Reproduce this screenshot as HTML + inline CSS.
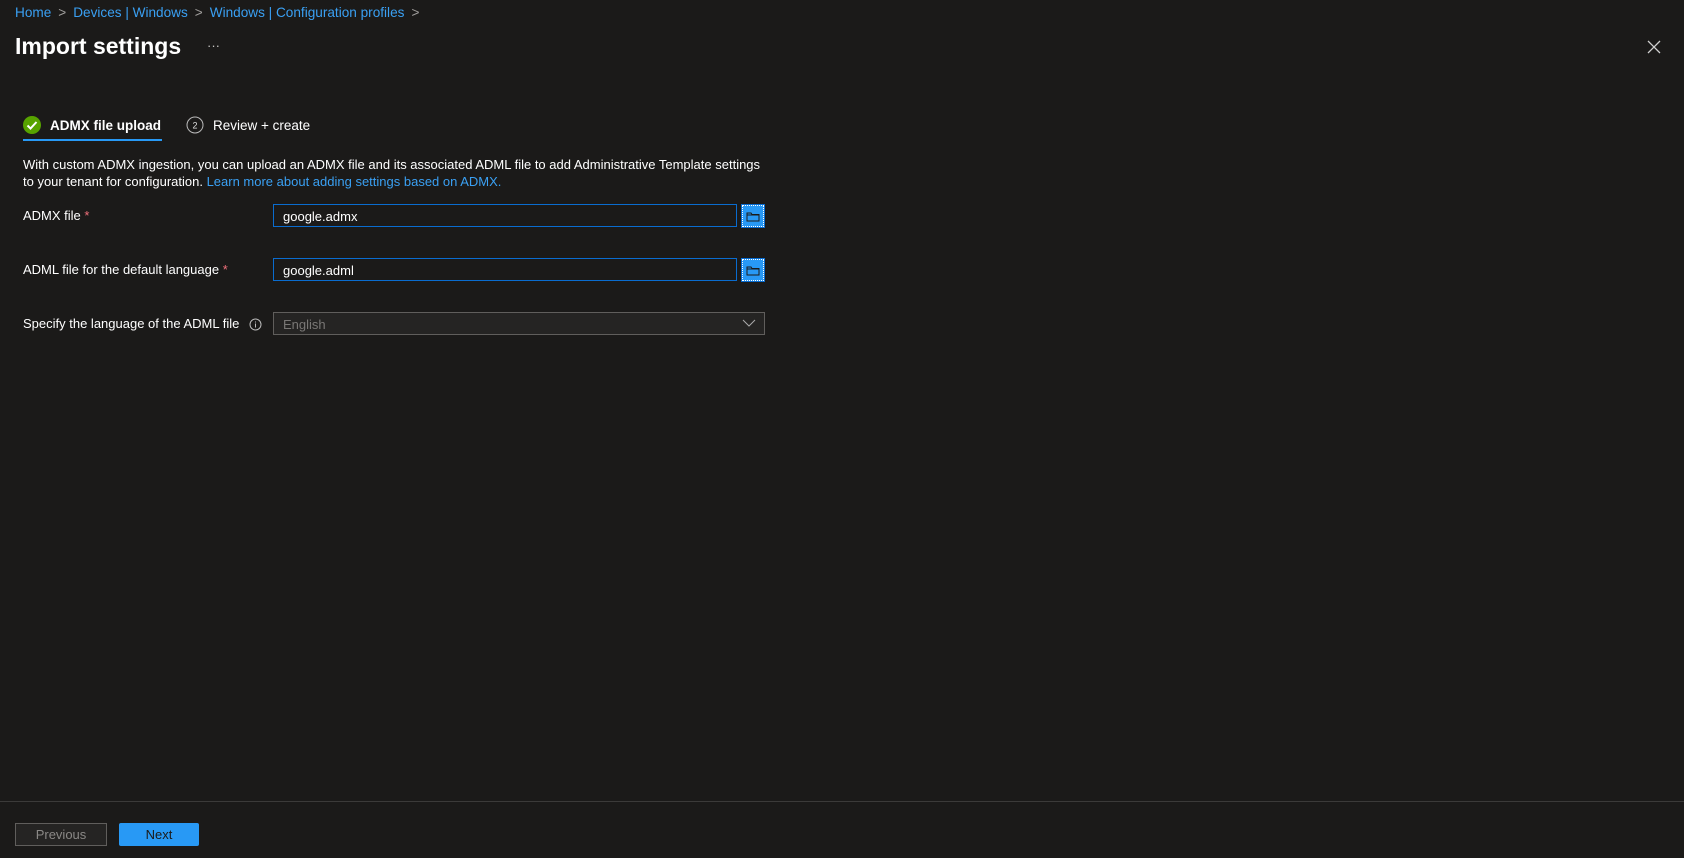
<!DOCTYPE html>
<html><head><meta charset="utf-8"><style>
*{box-sizing:border-box;margin:0;padding:0}
body{width:1684px;height:858px;background:#1b1a19;color:#fff;font-family:"Liberation Sans",sans-serif;font-size:13px;position:relative;overflow:hidden}
.a{position:absolute;white-space:nowrap}
.bc{color:#3aa0f3;top:5px;left:15px;font-size:13.6px}
.bc span{color:#a19f9d;margin:0 7px}
.title{top:33px;left:15px;font-size:23px;font-weight:bold}
.lbl{left:23px;color:#fff}
.req{color:#f1707b}
.inp{left:273px;width:464px;height:23px;border:1px solid #0a6ccf;padding:4px 9px;font-size:13px}
.fb{left:742px;width:22px;height:22px;background:#2899f5;border:1px dotted #fff;outline:1px solid #0a6ccf}
.link{color:#3aa0f3}
</style></head><body>
<div class="a bc">Home<span>&gt;</span>Devices | Windows<span>&gt;</span>Windows | Configuration profiles<span>&gt;</span></div>
<div class="a title">Import settings</div>
<div class="a" style="left:207px;top:38px;color:#c8c6c4;font-size:13px">···</div>
<svg class="a" style="left:1647px;top:40px" width="14" height="14"><path d="M1 1L13 13M13 1L1 13" stroke="#d0d0d0" stroke-width="1.3"/></svg>
<svg class="a" style="left:23px;top:116px" width="18" height="18"><circle cx="9" cy="9" r="9" fill="#57a300"/><path d="M4.5 9.5l3 3 6-6.5" stroke="#fff" stroke-width="2" fill="none"/></svg>
<div class="a" style="left:50px;top:118px;font-weight:bold;font-size:13.5px">ADMX file upload</div>
<div class="a" style="left:23px;top:139px;width:139px;height:2px;background:#2899f5"></div>
<svg class="a" style="left:186px;top:116px" width="18" height="18"><circle cx="9" cy="9" r="8" fill="none" stroke="#bbb"/><text x="9" y="12.5" font-size="9" fill="#ddd" text-anchor="middle" font-family="Liberation Sans">2</text></svg>
<div class="a" style="left:213px;top:118px;font-size:13.5px">Review + create</div>
<div class="a" style="left:23px;top:156px;line-height:17px">With custom ADMX ingestion, you can upload an ADMX file and its associated ADML file to add Administrative Template settings<br>to your tenant for configuration. <span class="link">Learn more about adding settings based on ADMX.</span></div>
<div class="a lbl" style="top:208px">ADMX file <span class="req">*</span></div>
<div class="a inp" style="top:204px">google.admx</div>
<div class="a fb" style="top:205px"><svg width="20" height="20"><path d="M4 7h4l1 1.5h7v6.5H4z M4 9h12" stroke="#1b1a19" fill="none" stroke-width="1"/></svg></div>
<div class="a lbl" style="top:262px">ADML file for the default language <span class="req">*</span></div>
<div class="a inp" style="top:258px">google.adml</div>
<div class="a fb" style="top:259px"><svg width="20" height="20"><path d="M4 7h4l1 1.5h7v6.5H4z M4 9h12" stroke="#1b1a19" fill="none" stroke-width="1"/></svg></div>
<div class="a lbl" style="top:316px">Specify the language of the ADML file</div>
<svg class="a" style="left:249px;top:318px" width="13" height="13"><circle cx="6.5" cy="6.5" r="5.5" fill="none" stroke="#bbb"/><path d="M6.5 5.5v4M6.5 3.5v1" stroke="#bbb"/></svg>
<div class="a inp" style="top:312px;width:492px;border-color:#605e5c;background:#252423;color:#797775">English</div>
<svg class="a" style="left:742px;top:319px" width="14" height="9"><path d="M1 1l6 6 6-6" stroke="#aaa" fill="none"/></svg>
<div class="a" style="left:0;top:801px;width:1684px;height:1px;background:#3b3a39"></div>
<div class="a" style="left:15px;top:823px;width:92px;height:23px;border:1px solid #605e5c;background:#252423;color:#8a8886;text-align:center;line-height:21px">Previous</div>
<div class="a" style="left:119px;top:823px;width:80px;height:23px;background:#2899f5;border-radius:2px;color:#1b1a19;text-align:center;line-height:23px">Next</div>
</body></html>
